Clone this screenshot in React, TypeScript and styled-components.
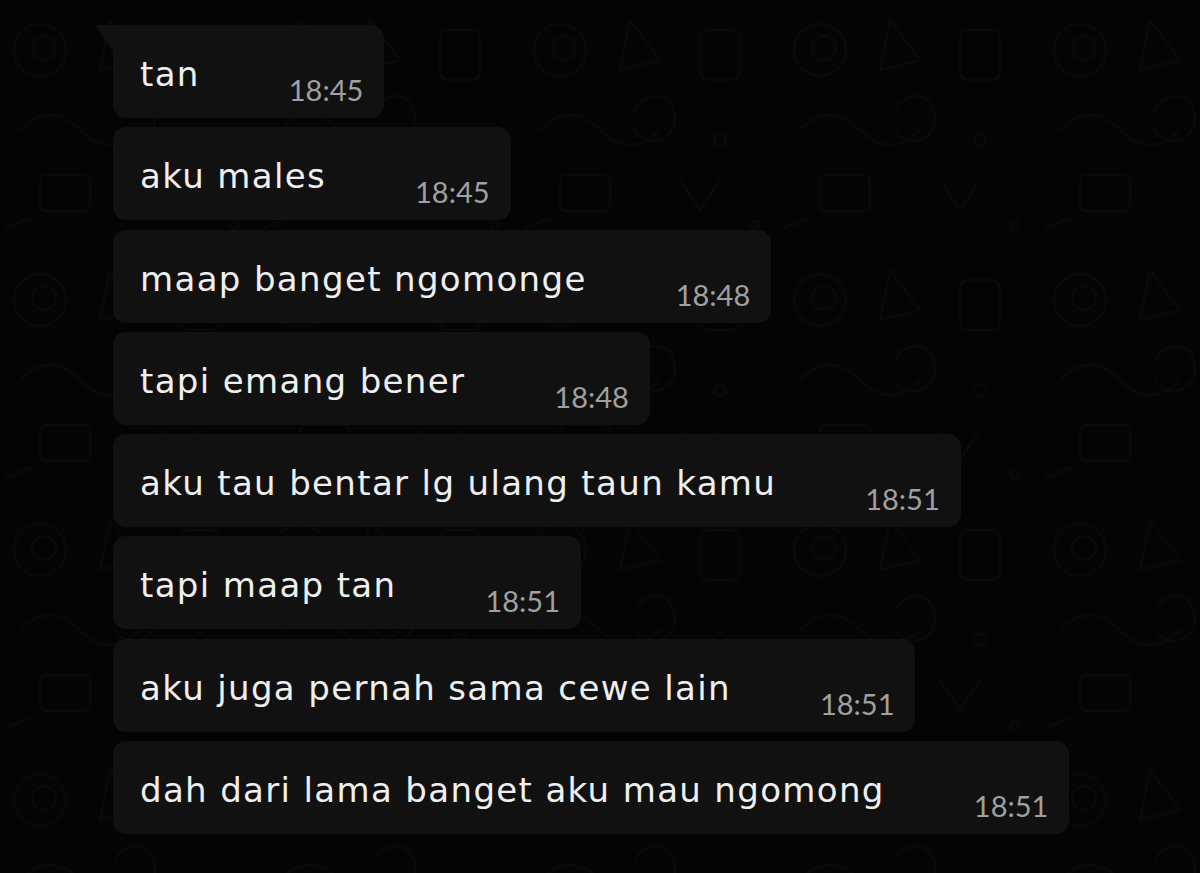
import React from "react";
import styled, { createGlobalStyle } from "styled-components";

const GlobalStyle = createGlobalStyle`
  html, body {
    margin: 0;
    padding: 0;
    background: #040404;
  }
  body {
    font-family: "DejaVu Sans", "Noto Sans", sans-serif;
    -webkit-font-smoothing: antialiased;
  }
`;

const Screen = styled.div`
  position: relative;
  width: 1200px;
  height: 873px;
  overflow: hidden;
  background: #040404;
`;

const Wallpaper = styled.svg`
  position: absolute;
  inset: 0;
  width: 100%;
  height: 100%;
  pointer-events: none;
`;

const Thread = styled.div`
  position: relative;
  display: flex;
  flex-direction: column;
  align-items: flex-start;
  gap: 9.3px;
  padding: 25px 0 0 113px;
`;

const Bubble = styled.div<{ $tail?: boolean }>`
  position: relative;
  display: flex;
  align-items: flex-start;
  box-sizing: border-box;
  height: 93px;
  padding: 29px 21px 0 27px;
  background: #111111;
  border-radius: ${(p) => (p.$tail ? "0 13px 13px 13px" : "13px")};

  ${(p) =>
    p.$tail &&
    `
    &::before {
      content: "";
      position: absolute;
      left: -18px;
      top: 0;
      width: 18px;
      height: 26px;
      background: #111111;
      clip-path: polygon(0 0, 100% 0, 100% 100%);
    }
  `}
`;

const MessageText = styled.span`
  font-family: "DejaVu Sans", "Noto Sans", sans-serif;
  font-size: 34px;
  line-height: 40px;
  letter-spacing: 1.35px;
  color: #efefef;
  white-space: nowrap;
`;

const Time = styled.span`
  margin-left: 89px;
  margin-top: 19px;
  font-family: Lato, "Noto Sans", sans-serif;
  font-size: 29px;
  line-height: 34px;
  color: #a0a0a0;
  white-space: nowrap;
`;

const messages = [
  { text: "tan", time: "18:45" },
  { text: "aku males", time: "18:45" },
  { text: "maap banget ngomonge", time: "18:48" },
  { text: "tapi emang bener", time: "18:48" },
  { text: "aku tau bentar lg ulang taun kamu", time: "18:51" },
  { text: "tapi maap tan", time: "18:51" },
  { text: "aku juga pernah sama cewe lain", time: "18:51" },
  { text: "dah dari lama banget aku mau ngomong", time: "18:51" },
];

function Doodles() {
  return (
    <Wallpaper viewBox="0 0 1200 873">
      <defs>
        <pattern id="wp" width="260" height="250" patternUnits="userSpaceOnUse">
          <g fill="none" stroke="#090909" strokeWidth="2" strokeLinecap="round" strokeLinejoin="round">
            <circle cx="40" cy="50" r="26" />
            <circle cx="44" cy="48" r="12" />
            <path d="M110 20 l30 40 l-40 10 z" />
            <rect x="180" y="30" width="40" height="50" rx="8" />
            <path d="M20 130 q30 -30 60 0 t60 0" />
            <circle cx="200" cy="140" r="6" />
            <path d="M160 180 l20 30 l20 -30" />
            <rect x="40" y="175" width="50" height="36" rx="6" />
            <path d="M115 110 c10 -20 40 -20 40 10 c0 20 -30 30 -40 10" />
            <circle cx="235" cy="225" r="4" />
            <path d="M5 228 l25 -10" />
          </g>
        </pattern>
      </defs>
      <rect width="1200" height="873" fill="url(#wp)" />
    </Wallpaper>
  );
}

export default function App() {
  return (
    <>
      <GlobalStyle />
      <Screen>
        <Doodles />
        <Thread>
          {messages.map((m, i) => (
            <Bubble key={i} $tail={i === 0}>
              <MessageText>{m.text}</MessageText>
              <Time>{m.time}</Time>
            </Bubble>
          ))}
        </Thread>
      </Screen>
    </>
  );
}
